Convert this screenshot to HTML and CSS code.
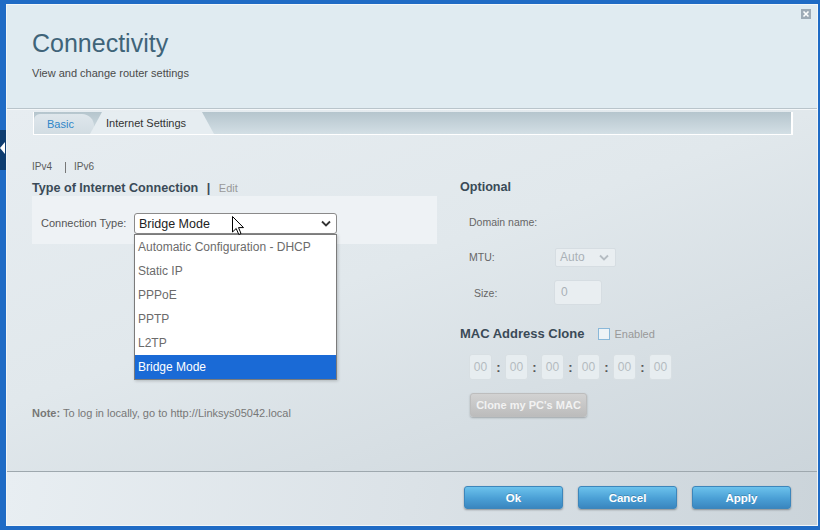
FILE: index.html
```html
<!DOCTYPE html>
<html lang="en">
<head>
    <meta charset="UTF-8">
    <meta name="viewport" content="width=device-width, initial-scale=1.0">
    <title>Connectivity</title>
    <link rel="stylesheet" href="styles.css">
</head>
<body>
    <div class="side-tab"><span class="side-arrow"></span></div>

    <div class="dialog">
        <header class="dialog-head">
            <h1>Connectivity</h1>
            <p>View and change router settings</p>
            <span class="close">
                <svg width="10" height="10" viewBox="0 0 10 10">
                    <rect width="10" height="10" fill="#9eabb6"/>
                    <path d="M2.5 2.5 L7.5 7.5 M7.5 2.5 L2.5 7.5" stroke="#fff" stroke-width="1.6"/>
                </svg>
            </span>
        </header>

        <main class="dialog-body">
            <nav class="tabs">
                <span class="tab tab-basic">Basic</span>
                <span class="tab tab-active">Internet Settings</span>
            </nav>

            <div class="columns">
                <section class="col-left">
                    <div class="proto">
                        <span>IPv4</span>
                        <span class="proto-sep"></span>
                        <span>IPv6</span>
                    </div>
                    <h2>Type of Internet Connection <span class="bar">|</span> <span class="edit">Edit</span></h2>

                    <div class="conn-box">
                        <label class="conn-label">Connection Type:</label>
                        <div class="select-wrap">
                            <div class="select">
                                <span>Bridge Mode</span>
                                <svg class="chevron" width="10" height="7" viewBox="0 0 10 7">
                                    <path d="M1 1.5 L5 5.5 L9 1.5" fill="none" stroke="#333" stroke-width="1.8"/>
                                </svg>
                            </div>
                            <ul class="options">
                                <li>Automatic Configuration - DHCP</li>
                                <li>Static IP</li>
                                <li>PPPoE</li>
                                <li>PPTP</li>
                                <li>L2TP</li>
                                <li class="selected">Bridge Mode</li>
                            </ul>
                            <svg class="cursor" width="13" height="20" viewBox="0 0 13 20">
                                <path d="M0.5 0.5 L0.5 16 L4.2 12.5 L6.8 18.5 L9 17.5 L6.5 11.6 L11.5 11.6 Z" fill="#fff" stroke="#000" stroke-width="1"/>
                            </svg>
                        </div>
                    </div>

                    <p class="note"><b>Note:</b> To log in locally, go to http://Linksys05042.local</p>
                </section>

                <section class="col-right">
                    <h2>Optional</h2>

                    <div class="row row-domain">
                        <span class="row-label">Domain name:</span>
                    </div>

                    <div class="row row-mtu">
                        <span class="row-label">MTU:</span>
                        <div class="mini-select">
                            <span>Auto</span>
                            <svg width="10" height="7" viewBox="0 0 10 7">
                                <path d="M1 1.5 L5 5.5 L9 1.5" fill="none" stroke="#b5bcc2" stroke-width="1.8"/>
                            </svg>
                        </div>
                    </div>

                    <div class="row row-size">
                        <span class="row-label size-label">Size:</span>
                        <div class="mini-input">0</div>
                    </div>

                    <div class="mac-head">
                        <h2>MAC Address Clone</h2>
                        <span class="checkbox"></span>
                        <span class="enabled">Enabled</span>
                    </div>

                    <div class="mac-fields">
                        <span class="mac-box">00</span><span class="colon">:</span>
                        <span class="mac-box">00</span><span class="colon">:</span>
                        <span class="mac-box">00</span><span class="colon">:</span>
                        <span class="mac-box">00</span><span class="colon">:</span>
                        <span class="mac-box">00</span><span class="colon">:</span>
                        <span class="mac-box">00</span>
                    </div>

                    <button class="clone-btn">Clone my PC's MAC</button>
                </section>
            </div>
        </main>

        <footer class="dialog-foot">
            <button class="btn">Ok</button>
            <button class="btn">Cancel</button>
            <button class="btn">Apply</button>
        </footer>
    </div>
</body>
</html>
```

FILE: styles.css
```css
* {
    margin: 0;
    padding: 0;
    box-sizing: border-box;
}

body {
    font-family: "Liberation Sans", Arial, sans-serif;
    background: #1f6bc5;
    padding: 4px 2px 4px 6px;
    height: 530px;
    overflow: hidden;
}

/* little tab sticking out on the left edge */
.side-tab {
    position: absolute;
    left: 0;
    top: 130px;
    width: 6px;
    height: 40px;
    background: #0f3d70;
}

.side-arrow {
    position: absolute;
    left: 0;
    top: 12px;
    width: 0;
    height: 0;
    border-top: 6px solid transparent;
    border-bottom: 6px solid transparent;
    border-right: 5px solid #fff;
}

.dialog {
    height: 522px;
    border: 1px solid #f2f6f8;
    display: flex;
    flex-direction: column;
    background: #e0ebf1;
}

.dialog-head {
    position: relative;
    height: 104px;
    padding: 23px 0 0 25px;
    background: #e0ebf1;
    border-bottom: 1px solid #b9c4cb;
}

.dialog-head h1 {
    font-size: 25px;
    line-height: 30px;
    font-weight: normal;
    color: #3f6479;
}

.dialog-head p {
    margin-top: 8px;
    font-size: 11px;
    line-height: 14px;
    color: #4a4a4a;
}

.close {
    position: absolute;
    top: 4px;
    right: 6px;
    display: flex;
}

.dialog-body {
    flex: 1;
    background: linear-gradient(160deg, #e7edf1 0%, #e1e8ec 45%, #ccd5db 100%);
    border-top: 1px solid #f4f7f9;
}

.tabs {
    margin: 2px 24px 0 26px;
    height: 23px;
    display: flex;
    align-items: flex-end;
    background: linear-gradient(#b5c5cd, #d3dfe5);
    border-left: 1px solid #fff;
    border-right: 2px solid #fff;
    border-bottom: 1px solid #fff;
}

.tab {
    font-size: 11px;
    line-height: 21px;
    height: 20px;
}

.tab-basic {
    width: 60px;
    padding-left: 13px;
    color: #2f86c8;
    background: linear-gradient(#dfe7ec, #d2dde3);
    border-radius: 6px 12px 0 0;
}

.tab-active {
    margin-left: -4px;
    width: 124px;
    height: 22px;
    line-height: 23px;
    padding-left: 16px;
    color: #333;
    background: #e6edf1;
    clip-path: polygon(0 100%, 12px 0, calc(100% - 12px) 0, 100% 100%);
}

.columns {
    display: flex;
    padding: 26px 0 0 25px;
}

.col-left {
    width: 405px;
}

.proto {
    display: flex;
    align-items: center;
    font-size: 10px;
    line-height: 12px;
    color: #5b5b5b;
}

.proto-sep {
    width: 1px;
    height: 11px;
    background: #777;
    margin: 0 8px 0 13px;
}

h2 {
    font-size: 12.6px;
    line-height: 16px;
    color: #3a4a57;
}

.col-left h2 {
    margin-top: 7px;
}

.bar {
    margin: 0 5px;
    color: #3a4a57;
}

.edit {
    font-size: 11px;
    font-weight: normal;
    color: #999;
}

.conn-box {
    height: 48px;
    display: flex;
    padding: 17px 0 0 9px;
    background: #eef2f5;
}

.conn-label {
    width: 93px;
    font-size: 11px;
    line-height: 20px;
    color: #555;
}

.select-wrap {
    position: relative;
}

.select {
    width: 203px;
    height: 21px;
    display: flex;
    align-items: center;
    justify-content: space-between;
    padding: 0 5px 0 4px;
    background: #fff;
    border: 1px solid #8a8a8a;
    border-radius: 3px;
    font-size: 12.5px;
    color: #222;
}

.options {
    position: absolute;
    top: 21px;
    left: 0;
    width: 203px;
    list-style: none;
    background: #fff;
    border: 1px solid #7b7b7b;
    box-shadow: 1px 1px 3px rgba(0, 0, 0, 0.2);
    z-index: 5;
}

.options li {
    height: 24px;
    line-height: 24px;
    padding-left: 3px;
    font-size: 12px;
    color: #6b6b6b;
}

.options li.selected {
    background: #1a6ad6;
    color: #fff;
}

.cursor {
    position: absolute;
    left: 98px;
    top: 3px;
    z-index: 6;
}

.note {
    margin-top: 162px;
    font-size: 11px;
    line-height: 14px;
    color: #777;
}

.col-right {
    padding: 18px 0 0 23px;
}

.row {
    display: flex;
    align-items: center;
    padding-left: 9px;
}

.row-label {
    width: 86px;
    font-size: 10.5px;
    color: #666;
}

.row-domain {
    height: 24px;
    margin-top: 15px;
}

.row-mtu {
    height: 24px;
    margin-top: 11px;
}

.mini-select {
    width: 61px;
    height: 19px;
    display: flex;
    align-items: center;
    justify-content: space-between;
    padding: 0 6px 0 4px;
    border: 1px solid #d6dde2;
    border-radius: 2px;
    background: #e9eef1;
    font-size: 12px;
    color: #aab1b7;
}

.row-size {
    height: 25px;
    margin-top: 11px;
}

.size-label {
    padding-left: 5px;
    width: 85px;
}

.mini-input {
    width: 48px;
    height: 25px;
    padding-left: 6px;
    line-height: 23px;
    border: 1px solid #d6dde2;
    border-radius: 3px;
    background: #e9eef1;
    font-size: 12px;
    color: #aab1b7;
}

.mac-head {
    display: flex;
    align-items: center;
    margin-top: 21px;
}

.mac-head h2 {
    font-size: 13px;
}

.checkbox {
    width: 12px;
    height: 12px;
    margin: 0 4px 0 14px;
    border: 1px solid #8ab8d9;
    background: #eef3f6;
}

.enabled {
    font-size: 11px;
    color: #999;
}

.mac-fields {
    display: flex;
    align-items: center;
    margin-top: 12px;
    padding-left: 9px;
}

.mac-box {
    width: 23px;
    height: 26px;
    line-height: 24px;
    text-align: center;
    border: 1px solid #d8dfe3;
    border-radius: 3px;
    background: #e7edf0;
    font-size: 12px;
    color: #b4bbc0;
}

.colon {
    width: 13px;
    text-align: center;
    font-size: 13px;
    font-weight: bold;
    color: #555;
}

.clone-btn {
    display: block;
    margin: 13px 0 0 10px;
    width: 117px;
    height: 24px;
    border: 1px solid #bdbdbd;
    border-radius: 3px;
    background: linear-gradient(#d2d2d2, #bcbcbc);
    box-shadow: 0 1px 2px rgba(0, 0, 0, 0.25);
    font-family: inherit;
    font-size: 11px;
    font-weight: bold;
    color: #f2f2f2;
}

.dialog-foot {
    height: 54px;
    display: flex;
    justify-content: flex-end;
    gap: 15px;
    padding: 14px 26px 0 0;
    border-top: 1px solid #9ea8ae;
    background: linear-gradient(100deg, #e8eef2 0%, #dbe2e7 50%, #cbd4da 100%);
}

.btn {
    width: 99px;
    height: 23px;
    border: 1px solid #3d86bb;
    border-radius: 3px;
    background: linear-gradient(#6cc2ec, #4a9fd5 55%, #3a86bf);
    box-shadow: 0 1px 2px rgba(0, 0, 0, 0.35);
    font-family: inherit;
    font-size: 11.5px;
    font-weight: bold;
    color: #fff;
    text-shadow: 0 -1px 0 rgba(0, 0, 0, 0.2);
}
```
